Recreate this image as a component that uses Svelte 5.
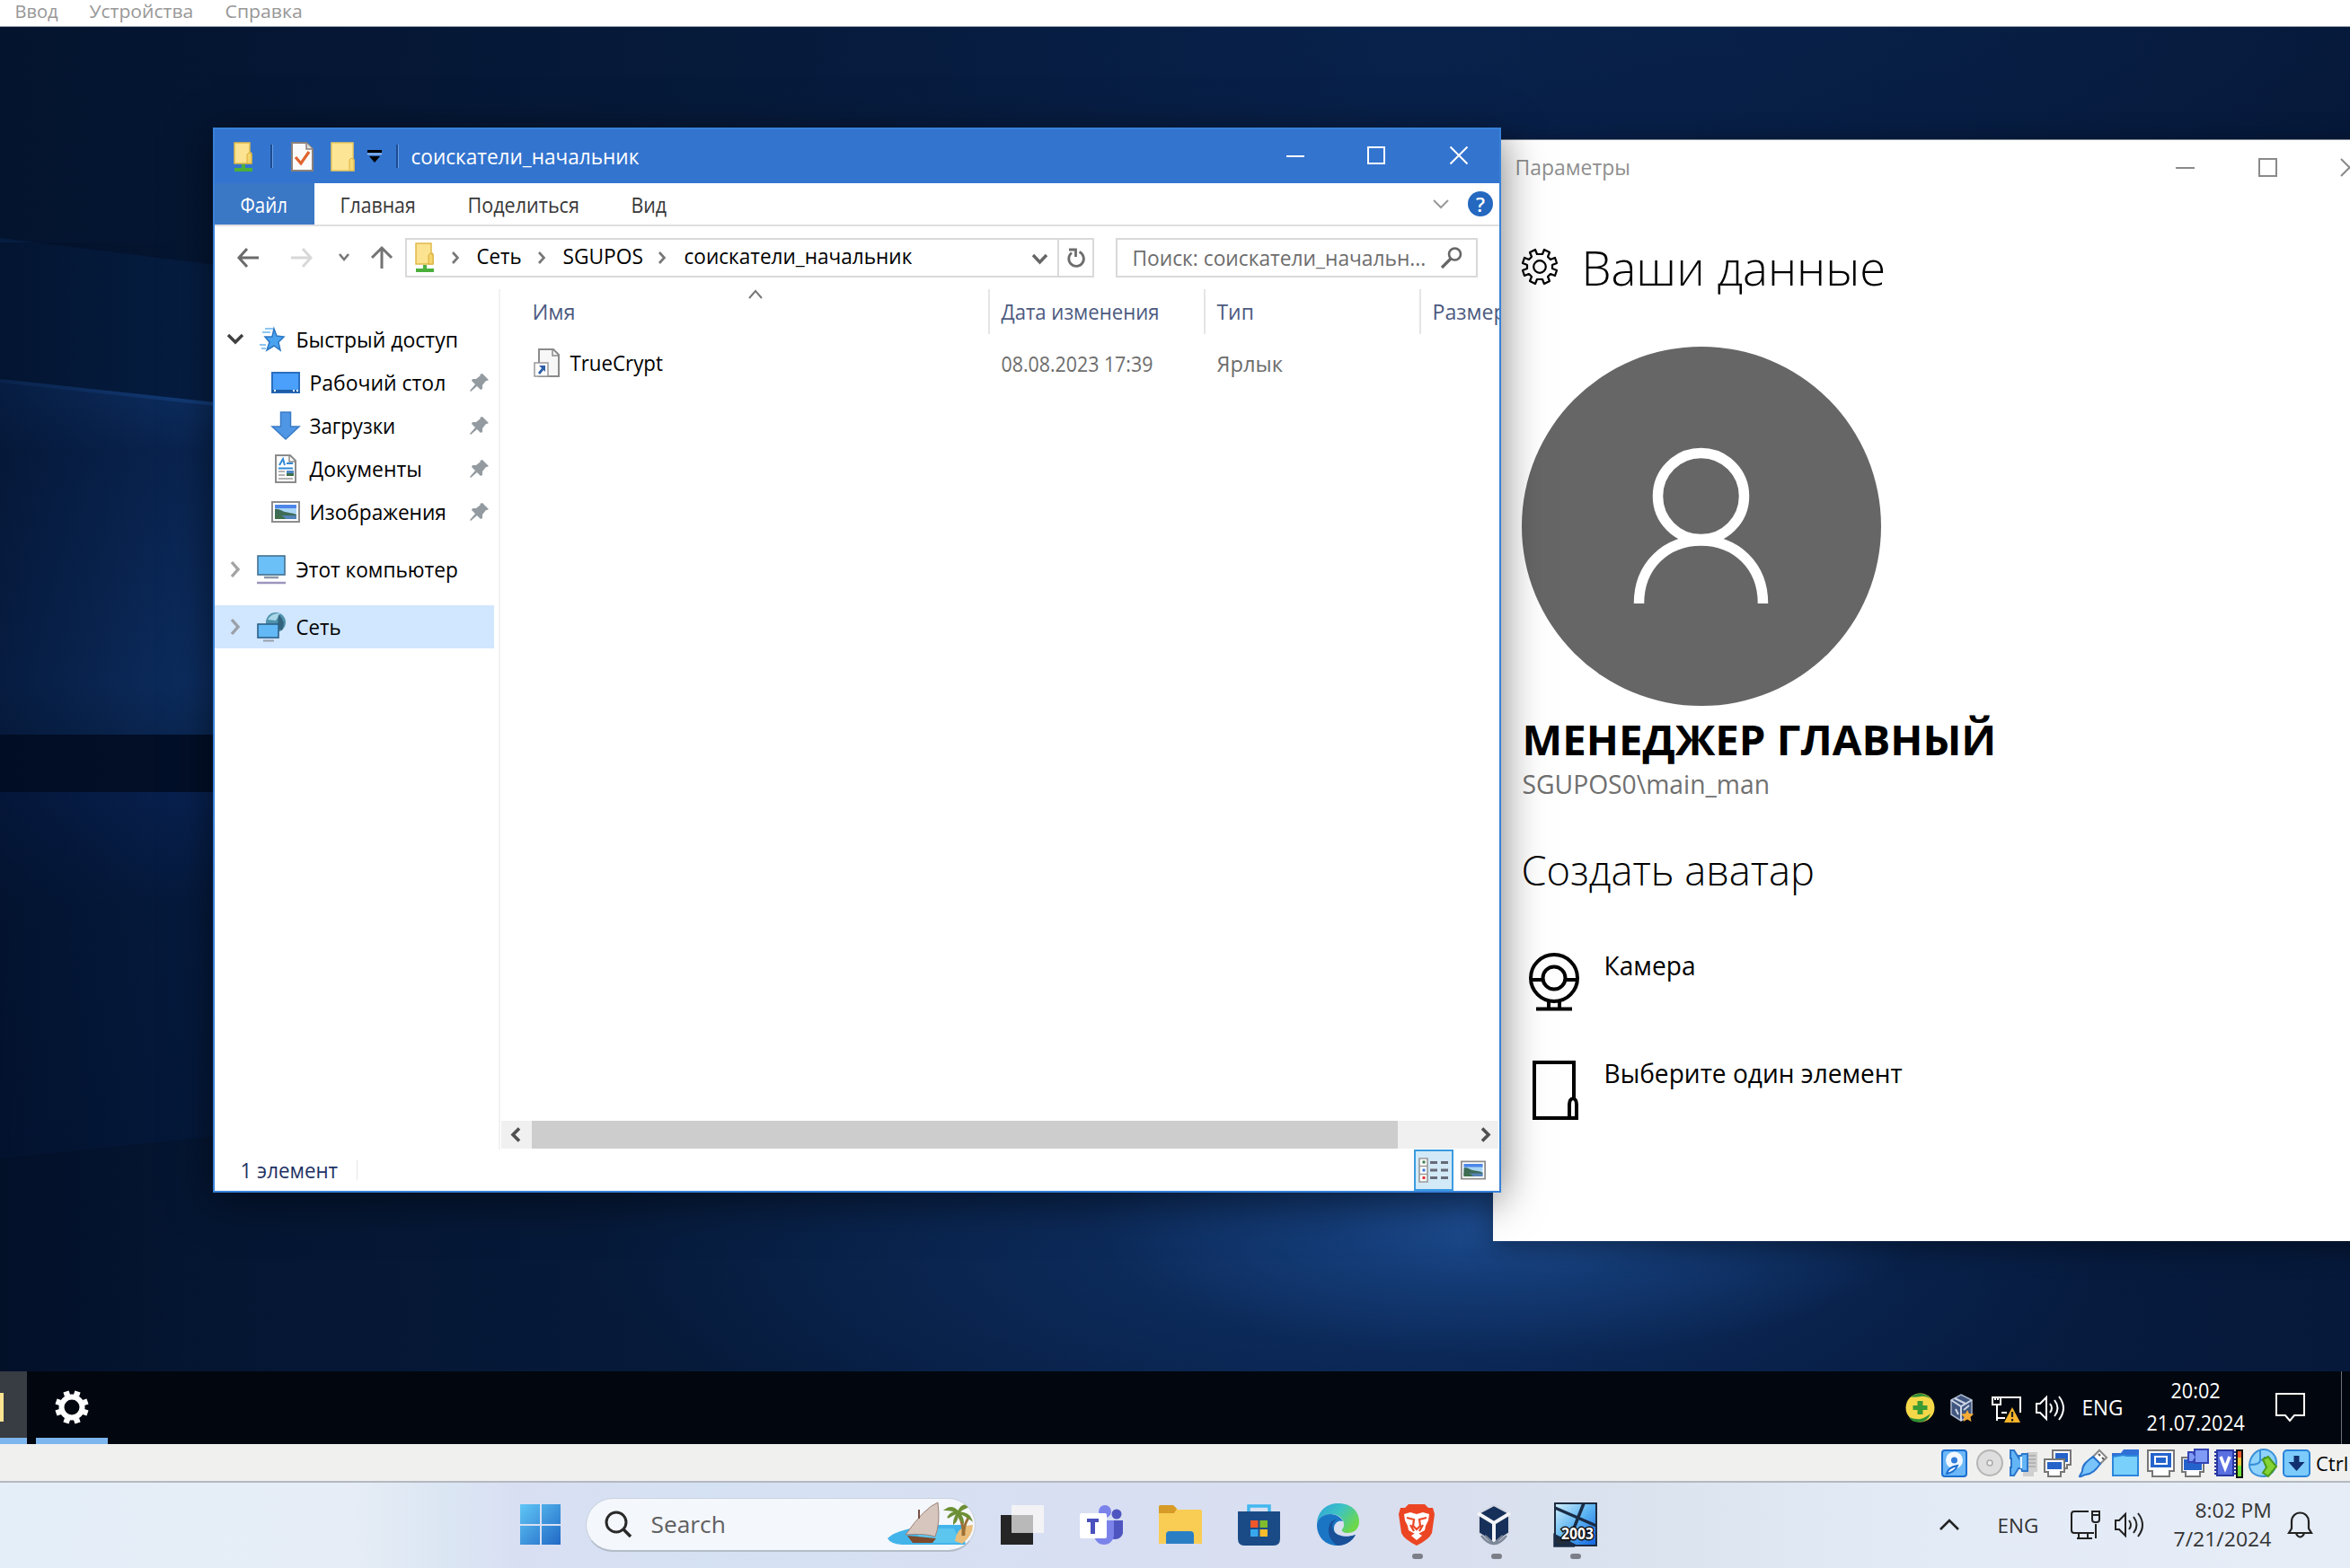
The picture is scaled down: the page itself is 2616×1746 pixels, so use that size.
<script>
  // Stretches or condenses a label horizontally so its glyphs span `width` pixels, less the side bearings.
  function fit(node, width) {
    const natural = node.offsetWidth;
    if (!natural) return;
    node.style.transform = `translateX(1.5px) scaleX(${(width - 2) / natural})`;
    node.style.marginRight = `${width - natural}px`;
  }

  const menu = [
    { text: 'Ввод', w: 50 },
    { text: 'Устройства', w: 118 },
    { text: 'Справка', w: 88 }
  ];

  const quick = [
    { text: 'Рабочий стол', icon: 'desktop', w: 154 },
    { text: 'Загрузки', icon: 'download', w: 98 },
    { text: 'Документы', icon: 'docs', w: 127 },
    { text: 'Изображения', icon: 'pics', w: 154 }
  ];

  const indicators = ['hdd', 'cd', 'audio', 'net', 'usb', 'folder', 'display', 'record', 'cpu', 'mouse', 'key'];
</script>

{#snippet t(text, w)}<span class="fit" use:fit={w}>{text}</span>{/snippet}

{#snippet netFolder()}
  <svg width="22" height="33" viewBox="0 0 22 33">
    <path d="M1 1h17v10l2 2v11H1z" fill="#fbe391" stroke="#e0b94a" stroke-width="1.5" />
    <path d="M15 24V14l2-2 3 2v10z" fill="#f5d56d" stroke="#d9ae3b" stroke-width="1" />
    <path d="M9 25h4v4h8v4H1v-4h8z" fill="#4caf3c" />
  </svg>
{/snippet}

{#snippet picture(w, h)}
  <svg width={w} height={h} viewBox="0 0 32 24">
    <rect x="1" y="1" width="30" height="22" fill="#fff" stroke="#8d8d8d" stroke-width="2" />
    <rect x="4" y="4" width="24" height="16" fill="#a9d5f5" />
    <rect x="4" y="4" width="24" height="4" fill="#4d86e8" />
    <path d="M4 9c5-1 7 2 11 3s8 1 13 3v2H4z" fill="#3e6b56" />
    <path d="M4 16h24v4H4z" fill="#5483b8" />
    <path d="M4 15c6 0 9 1 12 5H4z" fill="#3f6f4b" />
  </svg>
{/snippet}

{#snippet crumb()}
  <svg width="10" height="14" viewBox="0 0 10 14"><path d="M2 1l5.500 6L2 13" fill="none" stroke="#777" stroke-width="2.600" /></svg>
{/snippet}

{#snippet navIcon(name)}
  {#if name === 'desktop'}
    <svg width="32" height="24" viewBox="0 0 32 24">
      <rect x="1" y="1" width="30" height="22" fill="#4aa0fb" stroke="#2a6fc0" stroke-width="2" />
      <path d="M1 20h30v3H1z" fill="#1d5ca8" /><path d="M3 21h2M24 21h2M28 21h2" stroke="#fff" stroke-width="2" />
    </svg>
  {:else if name === 'download'}
    <svg width="32" height="32" viewBox="0 0 32 32"><path d="M10.500 1h11v16H31L16 31 1 17h9.500z" fill="#4f97e4" stroke="#3a7bc8" stroke-width="1.500" /></svg>
  {:else if name === 'docs'}
    <svg width="32" height="32" viewBox="0 0 32 32">
      <path d="M5 1h16l6 6v24H5z" fill="#fff" stroke="#8b8b8b" stroke-width="2" /><path d="M20 1v7h7" fill="none" stroke="#8b8b8b" stroke-width="1.500" />
      <path d="M9 12l4-7 2 7M17 10h7M8 15.500h16" stroke="#2f8ad8" stroke-width="2" fill="none" />
      <path d="M8 19h7M8 23h7M8 27h16" stroke="#9a9a9a" stroke-width="1.500" /><path d="M17 18h8v6h-8z" fill="#4d86c8" /><path d="M17 21h8v3h-8z" fill="#3f6f4b" />
    </svg>
  {:else}
    {@render picture(32, 24)}
  {/if}
{/snippet}

{#snippet speaker(color)}
  <svg width="34" height="30" viewBox="0 0 34 30" fill="none" stroke={color} stroke-width="2">
    <path d="M2 10h4l7-7v24l-7-7H2z" /><path d="M17 10q4 5 0 10M22 6q7 9 0 18M27 2q10 13 0 26" />
  </svg>
{/snippet}

{#snippet indicator(name)}
  <svg width="33" height="33" viewBox="0 0 33 33">
    {#if name === 'hdd'}
      <rect x="2" y="2" width="27" height="29" rx="3" fill="#6cb8f8" stroke="#1c6fd0" stroke-width="2" /><circle cx="15.500" cy="13" r="9.500" fill="#f2f8ff" /><circle cx="15.500" cy="13" r="3.500" fill="#2f7ddb" />
      <path d="M7 28c1-5 6-8 12-9-2 5-6 8-12 9z" fill="#eef6ff" stroke="#1c6fd0" stroke-width="2" />
    {:else if name === 'cd'}
      <circle cx="16" cy="16" r="14" fill="#dedede" stroke="#b5b5b5" stroke-width="2" /><circle cx="16" cy="16" r="3" fill="#eee" stroke="#aaa" stroke-width="1.500" />
    {:else if name === 'audio'}
      <path d="M20 4h12v22h-4v5H16v-5h4z" fill="#cfcfcf" /><path d="M22 8h8M22 12h8M22 16h8M22 20h8" stroke="#aaa" stroke-width="1.500" />
      <path d="M2 2h4l5 8V8q0 0 3 0l1-2h6v19h-6l-1-3h-3l-5 8H2v-9h1V11H2z" fill="#64b5f6" stroke="#2c76c9" stroke-width="2" /><path d="M14 9v13" stroke="#e4f3ff" stroke-width="2" />
    {:else if name === 'net'}
      <path d="M11 2h20v16h-4v4H15v-4h-4z" fill="#fff" stroke="#777" stroke-width="2" /><path d="M14 5h14v10H14z" fill="#2563c9" />
      <path d="M2 12h22v14h-4v5H6v-5H2z" fill="#fff" stroke="#777" stroke-width="2" /><path d="M5 15h16v8H5z" fill="#2563c9" />
    {:else if name === 'usb'}
      <path d="M17 9l7-7 8 8-7 7z" fill="#fff" stroke="#888" stroke-width="2" /><path d="M23 6l2 2M27 10l2 2" stroke="#555" stroke-width="2" />
      <path d="M2 31c1-3 2-3 3-6 0-7 5-11 12-16l8 8c-5 7-9 11-16 12-3 0-4 3-7 2z" fill="#79c4fb" stroke="#2672cc" stroke-width="2" />
    {:else if name === 'folder'}
      <path d="M1 5h10l3-4h17v8H1z" fill="#2f6fd6" /><path d="M2 9l12-2 3 1h13v22H2z" fill="#79d0fb" stroke="#2b86dc" stroke-width="2" />
    {:else if name === 'display'}
      <path d="M2 2h29v23h-5v6H7v-6H2z" fill="#fff" stroke="#777" stroke-width="2" /><path d="M5 5h23v16H5z" fill="#2463cc" /><path d="M10 9h13v8H10z" fill="#2463cc" stroke="#fff" stroke-width="2" />
    {:else if name === 'record'}
      <path d="M2 10h24v16h-4v5H6v-5H2z" fill="#fff" stroke="#777" stroke-width="2" /><path d="M4 12h20v12H4z" fill="#2463cc" /><path d="M9 4h5l2 3V1h15v15H16v-4l-2 3H9z" fill="#7f9bf5" stroke="#3445b5" stroke-width="2" />
    {:else if name === 'cpu'}
      <path d="M1 4h24M1 8h24M1 12h24M1 16h24M1 20h24M1 24h24M1 28h24" stroke="#2838a0" stroke-width="2" /><rect x="4" y="2" width="18" height="28" fill="#5a6fe0" stroke="#2838a0" stroke-width="2" />
      <path d="M8 9l5 13 5-13" fill="none" stroke="#fff" stroke-width="3.500" />
      <rect x="25" y="1" width="8" height="32" fill="#111" /><path d="M27 3h4v7h-4z" fill="#f55a2c" /><path d="M27 10h4v9h-4z" fill="#f5c83a" /><path d="M27 19h4v12h-4z" fill="#72e036" />
    {:else if name === 'mouse'}
      <path d="M2 18C3 8 10 1 18 1s14 7 14 14c0 9-7 16-14 16S2 28 2 18z" fill="#8fd3fb" stroke="#3a90d8" stroke-width="2" /><path d="M14 2v11c3 0 5-1 5-4M2 18c5 0 12-1 12-5" stroke="#3a90d8" stroke-width="2" fill="none" />
      <path d="M17 12l6-3 9 11-9 11-6-4 4-6z" fill="#83d334" stroke="#4c9a1c" stroke-width="2" />
    {:else}
      <rect x="2" y="2" width="29" height="29" rx="4" fill="#7ccbfb" stroke="#2a83d8" stroke-width="2" /><path d="M13.500 8h6v7h6L16.500 25l-9-10h6z" fill="#12306e" />
    {/if}
  </svg>
{/snippet}

<div class="screen">
  <div class="menubar">
    {#each menu as m}<span class="menuitem">{@render t(m.text, m.w)}</span>{/each}
  </div>

  <div class="desktop">
    <!-- Wallpaper light beams and horizon on the left -->
    <svg class="wallpaper" width="600" height="1497" viewBox="0 0 600 1497">
      <defs>
        <linearGradient id="beam" x1="0" y1="0" x2="0" y2="1"><stop stop-color="#0d2f62" /><stop offset=".2" stop-color="#092450" /><stop offset=".85" stop-color="#0c2c5e" /><stop offset="1" stop-color="#0a2753" /></linearGradient>
        <linearGradient id="floor" x1="0" y1="0" x2="0" y2="1"><stop stop-color="#082150" /><stop offset=".3" stop-color="#051a3d" /><stop offset="1" stop-color="#04183a" /></linearGradient>
        <linearGradient id="side" x1="0" y1="0" x2="1" y2="0"><stop stop-color="#010c22" stop-opacity=".5" /><stop offset=".35" stop-color="#010c22" stop-opacity="0" /></linearGradient>
      </defs>
      <path d="M0 235l240 30v160L0 396z" fill="#061f45" opacity=".8" />
      <path d="M0 394l240 26v370H0z" fill="url(#beam)" />
      <path d="M0 394l240 26" stroke="#123a75" stroke-width="4" />
      <path d="M0 788h240v66H0z" fill="#020f28" />
      <path d="M0 852h240v383L0 1260z" fill="url(#floor)" />
      <path d="M0 240h600v1257H0z" fill="url(#side)" />
    </svg>

    <!-- Settings window -->
    <section class="settings">
      <header class="settings-title">
        <span>{@render t('Параметры', 130)}</span>
        <svg width="21" height="21" viewBox="0 0 21 21"><path d="M0 11h21" stroke="#8a8a8a" stroke-width="2" /></svg>
        <svg width="21" height="21" viewBox="0 0 21 21"><rect x="1" y="1" width="19" height="19" fill="none" stroke="#8a8a8a" stroke-width="2" /></svg>
        <svg width="21" height="21" viewBox="0 0 21 21"><path d="M1 1l19 19M20 1L1 20" stroke="#8a8a8a" stroke-width="2" /></svg>
      </header>
      <div class="heading">
        <svg width="40" height="40" viewBox="0 0 40 40" fill="none" stroke="#000" stroke-width="2.200" stroke-linejoin="round">
          <path d="M17 6l-2-5-6 3 2 5-3 3-5-2-2 6 5 2v4l-5 2 2 6 5-2 3 3-2 5 6 3 2-5h6l2 5 6-3-2-5 3-3 5 2 2-6-5-2v-4l5-2-2-6-5 2-3-3 2-5-6-3-2 5z" /><circle cx="20" cy="20" r="6.800" />
        </svg>
        <span class="h1">{@render t('Ваши данные', 341)}</span>
      </div>
      <svg class="avatar" width="400" height="400" viewBox="0 0 400 400">
        <circle cx="200" cy="200" r="200" fill="#666" />
        <g fill="none" stroke="#fff" stroke-width="11.500"><circle cx="199.500" cy="166.500" r="48" /><path d="M130.500 286c0-42 30-70 69-70s69 28 69 70" /></g>
      </svg>
      <div class="name">{@render t('МЕНЕДЖЕР ГЛАВНЫЙ', 530)}</div>
      <div class="account">{@render t('SGUPOS0\\main_man', 278)}</div>
      <div class="h2">{@render t('Создать аватар', 329)}</div>
      <div class="options">
        <div class="option">
          <svg width="64" height="70" viewBox="0 0 64 70" fill="none" stroke="#000" stroke-width="4">
            <circle cx="35" cy="33" r="26" /><circle cx="35" cy="33" r="12.500" /><path d="M9 35h13M48 35h13M29 59v7M41 59v7M15 67.500h40" />
          </svg>
          <span>{@render t('Камера', 104)}</span>
        </div>
        <div class="option">
          <svg width="64" height="75" viewBox="0 0 64 75" fill="none" stroke="#000" stroke-width="4">
            <path d="M57 48V7H13v62h47V54c0-9-8-9-8 0v15" />
          </svg>
          <span>{@render t('Выберите один элемент', 334)}</span>
        </div>
      </div>
    </section>

    <!-- File explorer window -->
    <section class="explorer">
      <header class="titlebar">
        {@render netFolder()}
        <i class="sep"></i>
        <svg width="26" height="33" viewBox="0 0 26 33"><path d="M1 1h16l7 7v24H1z" fill="#fafafa" stroke="#8b8178" stroke-width="2" /><path d="M17 1v7h7" fill="#ddd" stroke="#8b8178" stroke-width="1.500" /><path d="M5 17l6 7 9-13" fill="none" stroke="#e0642c" stroke-width="3.200" /></svg>
        <svg width="28" height="33" viewBox="0 0 28 33"><path d="M1 1h24v18l1 1v12H1z" fill="#fce594" stroke="#ecc95c" stroke-width="1.500" /><path d="M21 32V20l2-2 3 2v12z" fill="#f8da76" stroke="#dcb545" /></svg>
        <svg width="16" height="14" viewBox="0 0 16 14"><path d="M0 0h16v3H0zM2 7h12l-6 7z" fill="#000" /><path d="M0 4.500h16" stroke="#a9c6ee" stroke-width="1.500" /></svg>
        <i class="sep"></i>
        <span class="title">{@render t('соискатели_начальник', 256)}</span>
        <svg class="ctl" width="20" height="20" viewBox="0 0 20 20"><path d="M0 11h20" stroke="#fff" stroke-width="2" /></svg>
        <svg class="ctl" width="20" height="20" viewBox="0 0 20 20"><rect x="1" y="1" width="18" height="18" fill="none" stroke="#fff" stroke-width="2" /></svg>
        <svg class="ctl" width="20" height="20" viewBox="0 0 20 20"><path d="M.500.500l19 19M19.500.500l-19 19" stroke="#fff" stroke-width="2" /></svg>
      </header>

      <nav class="ribbon">
        <span class="file"><span>{@render t('Файл', 54)}</span></span>
        <span>{@render t('Главная', 86)}</span>
        <span>{@render t('Поделиться', 126)}</span>
        <span>{@render t('Вид', 42)}</span>
        <svg width="18" height="11" viewBox="0 0 18 11"><path d="M1 1l8 8 8-8" fill="none" stroke="#999" stroke-width="2" /></svg>
        <span class="help">?</span>
      </nav>

      <div class="address">
        <svg width="24" height="22" viewBox="0 0 24 22"><path d="M11 1L2 11l9 10M2 11h22" fill="none" stroke="#6b6b6b" stroke-width="3" /></svg>
        <svg width="24" height="22" viewBox="0 0 24 22"><path d="M13 1l9 10-9 10M22 11H0" fill="none" stroke="#d8d8d8" stroke-width="3" /></svg>
        <svg width="12" height="9" viewBox="0 0 12 9"><path d="M1 1l5 6 5-6" fill="none" stroke="#777" stroke-width="2.600" /></svg>
        <svg width="24" height="25" viewBox="0 0 24 25"><path d="M1 13L12 2l11 11M12 2v23" fill="none" stroke="#737373" stroke-width="3" /></svg>
        <div class="path">
          {@render netFolder()}
          {@render crumb()}
          <span>{@render t('Сеть', 52)}</span>
          {@render crumb()}
          <span>{@render t('SGUPOS', 91)}</span>
          {@render crumb()}
          <span>{@render t('соискатели_начальник', 256)}</span>
          <svg class="low" width="17" height="12" viewBox="0 0 17 12"><path d="M1 1l7.500 8L16 1" fill="none" stroke="#666" stroke-width="3.400" /></svg>
          <span class="refresh"><svg width="22" height="24" viewBox="0 0 22 24"><path d="M14.500 5.500A8.300 8.300 0 1 1 6 6.500M3 3h7.500v8" fill="none" stroke="#6d6d6d" stroke-width="2.800" /></svg></span>
        </div>
        <div class="search">
          <span>{@render t('Поиск: соискатели_начальн...', 329)}</span>
          <svg width="24" height="24" viewBox="0 0 24 24"><circle cx="15.500" cy="8" r="6.500" fill="none" stroke="#666" stroke-width="2.600" /><path d="M11 13L1 23" stroke="#666" stroke-width="3.200" /></svg>
        </div>
      </div>

      <div class="body">
        <aside class="tree">
          <div class="node top">
            <svg width="20" height="14" viewBox="0 0 20 14"><path d="M2 2l8 8 8-8" fill="none" stroke="#404040" stroke-width="3.400" /></svg>
            <svg width="34" height="30" viewBox="0 0 34 30"><path d="M19 3l3 8 8 1-6 6 2 9-7-5-8 5 3-9-5-6h8z" fill="#4aa3ef" stroke="#2a76c4" stroke-width="1.500" /><path d="M9 3h9M6 7h9M3 21h7M5 25h5" stroke="#6bb4ee" stroke-width="1.500" /></svg>
            <span>{@render t('Быстрый доступ', 182)}</span>
          </div>
          {#each quick as q}
            <div class="node sub">
              {@render navIcon(q.icon)}
              <span>{@render t(q.text, q.w)}</span>
              <svg width="22" height="22" viewBox="0 0 22 22"><path d="M14 1l7 7-2 1-1 0-4 5 0 4-2 1-4-4-7 6-1-1 6-7-4-4 1-2h4l5-4-1-1z" fill="#939ba1" /></svg>
            </div>
          {/each}
          <div class="node top gap">
            <svg class="arr" width="20" height="20" viewBox="0 0 20 20"><path d="M6 2l7 8-7 8" fill="none" stroke="#a3a3a3" stroke-width="3.400" /></svg>
            <svg width="32" height="32" viewBox="0 0 32 32"><rect x="1" y="1" width="30" height="21" fill="#6cc0f8" stroke="#44708f" stroke-width="1.600" /><path d="M8 25h16" stroke="#8b97a5" stroke-width="2.500" /><path d="M0 31h32" stroke="#9c95bf" stroke-width="2.500" /></svg>
            <span>{@render t('Этот компьютер', 182)}</span>
          </div>
          <div class="node top gap selected">
            <svg class="arr" width="20" height="20" viewBox="0 0 20 20"><path d="M6 2l7 8-7 8" fill="none" stroke="#9aa0a8" stroke-width="3.400" /></svg>
            <svg width="34" height="34" viewBox="0 0 34 34"><circle cx="21" cy="12" r="11" fill="#4f92ad" /><path d="M12 9q4-8 14-7l-5 8z" fill="#a9d6e8" /><path d="M24 3q9 8 4 18l-5-2z" fill="#33647d" /><rect x="1" y="14" width="23" height="15" fill="#62b9f5" stroke="#2d5f87" stroke-width="1.600" /><path d="M7 32.500h12" stroke="#97a0ab" stroke-width="2" /></svg>
            <span>{@render t('Сеть', 52)}</span>
          </div>
        </aside>

        <div class="main">
          <div class="cols">
            <span class="col first">{@render t('Имя', 50)}</span>
            <span class="col">{@render t('Дата изменения', 178)}</span>
            <span class="col">{@render t('Тип', 43)}</span>
            <span class="col">{@render t('Размер', 84)}</span>
            <svg class="sort" width="16" height="11" viewBox="0 0 16 11"><path d="M1 10l7-8 7 8" fill="none" stroke="#777" stroke-width="2" /></svg>
          </div>
          <div class="cols row">
            <span class="col first entry">
              <svg width="32" height="34" viewBox="0 0 32 34"><path d="M7 2h16l6 6v24H7z" fill="#f7f7f7" stroke="#8b8b8b" stroke-width="2" /><path d="M22 2v7h7" fill="none" stroke="#8b8b8b" stroke-width="1.500" /><rect x="2" y="17" width="15" height="15" fill="#fff" stroke="#999" stroke-width="1.500" /><path d="M7 20h7v7l-2-2-4 5-2-2 4-5z" fill="#2d5ea8" /></svg>
              <b>{@render t('TrueCrypt', 105)}</b>
            </span>
            <span class="col">{@render t('08.08.2023 17:39', 171)}</span>
            <span class="col">{@render t('Ярлык', 75)}</span>
          </div>
          <div class="scroll">
            <svg width="34" height="31" viewBox="0 0 34 31"><path d="M20 8.500l-7 7 7 7" fill="none" stroke="#505050" stroke-width="3.600" /></svg>
            <div class="thumb"></div>
            <svg width="34" height="31" viewBox="0 0 34 31"><path d="M14 8.500l7 7-7 7" fill="none" stroke="#505050" stroke-width="3.600" /></svg>
          </div>
        </div>
      </div>

      <footer class="status">
        <span class="count">{@render t('1 элемент', 111)}</span>
        <i></i>
        <span class="view">
          <svg width="34" height="28" viewBox="0 0 34 28"><path d="M1 1h9v26H1zM1 9.500h9M1 18.500h9" fill="#fff" stroke="#999" stroke-width="1.600" /><path d="M4.500 5h3" stroke="#3a7a4a" stroke-width="3" /><path d="M4.500 14h3" stroke="#3a7ae0" stroke-width="3" /><path d="M4.500 22.500h3" stroke="#e03030" stroke-width="3" /><path d="M13 5.500h8M25 5.500h8M13 14h8M25 14h8M13 22.500h8M25 22.500h8" stroke="#666b78" stroke-width="2.800" /></svg>
        </span>
        {@render picture(28, 22)}
      </footer>
    </section>
  </div>

  <div class="task10">
    <div class="app active"><i></i></div>
    <div class="app gear">
      <svg width="38" height="38" viewBox="0 0 38 38"><circle cx="19" cy="19" r="11.500" fill="none" stroke="#fff" stroke-width="6" /><g stroke="#fff" stroke-width="6.500"><path d="M14 6L12.500 1.500M24 6l1.500-4.500M14 32l-1.500 4.500M24 32l1.500 4.500M6 14l-4.500-1.500M6 24l-4.500 1.500M32 14l4.500-1.500M32 24l4.500 1.500" /></g></svg>
    </div>
    <svg width="33" height="33" viewBox="0 0 33 33"><circle cx="16.500" cy="16.500" r="16" fill="#f5d84a" /><path d="M6 4.500Q18-4 29 7q-7-4-12-3T6 4.500zM4 27q8 3 13 2t11-6q-3 9-12 9.500T4 27z" fill="#2f8f35" /><path d="M13.500 9h6v5h5v5h-5v5h-6v-5h-5v-5h5z" fill="#3a9a33" /></svg>
    <svg width="28" height="32" viewBox="0 0 28 32"><path d="M12 1l12 6v16l-12 7L1 23V7z" fill="#40567f" stroke="#a8b4cc" stroke-width="1.500" /><path d="M1 7l11 7 12-7M12 14v16M5 5l12 6M6 17l3 6M15 18l6-5" stroke="#cdd6e6" stroke-width="2" fill="none" /><path d="M19 18l2 4 5 .500-3.500 3.500 1 5-4.500-2.500-4.500 2.500 1-5L12 22.500l5-.500z" fill="#f5ab35" /></svg>
    <svg width="34" height="32" viewBox="0 0 34 32"><path d="M10 4h22v17M11 21h6M6 12v18M6 27h9M1 4h9v8H1zM4 4v3M7 4v3" fill="none" stroke="#fff" stroke-width="2" /><path d="M23 15l9 17H14z" fill="#f7b52b" /><path d="M23 20v6M23 28v2.500" stroke="#222" stroke-width="2.200" /></svg>
    {@render speaker('#fff')}
    <span class="lang">{@render t('ENG', 48)}</span>
    <div class="clock10"><span>{@render t('20:02', 57)}</span><span>{@render t('21.07.2024', 111)}</span></div>
    <svg width="33" height="33" viewBox="0 0 33 33"><path d="M1 1h31v24H21l-5 6-5-6H1z" fill="none" stroke="#fff" stroke-width="2" /></svg>
    <i class="peek"></i>
  </div>

  <div class="vmstatus">
    {#each indicators as name}{@render indicator(name)}{/each}
    <span>Ctrl</span>
  </div>

  <div class="task11">
    <svg width="47" height="47" viewBox="0 0 47 47">
      <defs><linearGradient id="win" x1="0" y1="0" x2="47" y2="47" gradientUnits="userSpaceOnUse"><stop stop-color="#62c9f7" /><stop offset="1" stop-color="#1f66c4" /></linearGradient></defs>
      <path d="M1 1h22v22H1zM25 1h21v22H25zM1 25h22v21H1zM25 25h21v21H25z" fill="url(#win)" />
    </svg>
    <div class="pill">
      <svg width="30" height="30" viewBox="0 0 30 30"><circle cx="13" cy="13" r="11" fill="none" stroke="#2a2a2a" stroke-width="3" /><path d="M21 21l8 8" stroke="#2a2a2a" stroke-width="3.500" /></svg>
      <span>{@render t('Search', 85)}</span>
      <svg width="98" height="50" viewBox="0 0 98 50">
        <path d="M1 41q6-6 18-9l20-6h44l5 22H17Q4 47 1 41z" fill="#42b4ea" /><path d="M30 30h45l7 16H40z" fill="#69cdf1" opacity=".7" />
        <path d="M76 44q2-14 13-17 6-1 7-1 0 12-12 21z" fill="#e9bd7a" />
        <path d="M57 1Q42 7 21 37q20-2 33 2Q60 24 57 1z" fill="#d6c6be" stroke="#9a8378" stroke-width="1" /><path d="M36 9v10" stroke="#7a5146" stroke-width="2" />
        <path d="M23 38l32 3-4 5H29z" fill="#7d4a2c" />
        <path d="M85 38q1-12-5-24M86 38q-1-10 5-20" fill="none" stroke="#9b7138" stroke-width="3" /><path d="M66 9q7-5 14 3-8-3-14-3zM80 12q3-10 13-7-8 2-13 7zM68 18q4-7 12-6-7 2-12 6zM80 12q12 1 14 8-6-5-14-8zM79 13q-4 6-4 11 4-3 4-11zM80 12q5 6 5 11-5-4-5-11z" fill="#6d8f35" stroke="#6d8f35" stroke-width="2" />
      </svg>
    </div>
    <svg width="48" height="46" viewBox="0 0 48 46"><rect x="0" y="12" width="36" height="33" fill="#252525" /><rect x="12" y="1" width="36" height="31" fill="#f3f3f5" /><rect x="12" y="12" width="24" height="20" fill="#b9b9ba" /></svg>
    <svg width="48" height="48" viewBox="0 0 48 48"><circle cx="28" cy="9" r="7" fill="#7b83eb" /><circle cx="41" cy="12" r="5.500" fill="#4f55c0" /><path d="M35 19h13v14a9 9 0 0 1-13 6z" fill="#4f55c0" /><path d="M16 19h22v16a11 11 0 0 1-22 0z" fill="#7b83eb" /><rect x="0" y="11" width="30" height="28" rx="2" fill="#fff" /><path d="M8 17h13v4h-4v13h-5V21H8z" fill="#4a50bd" /></svg>
    <svg width="48" height="46" viewBox="0 0 48 46"><path d="M0 3q0-2 2-2h14l5 5h25q2 0 2 2v36H0z" fill="#f9cd54" /><path d="M0 3q0-2 2-2h14l4 4-3 5H0z" fill="#d79b28" /><path d="M8 44V34q0-4 4-4h23q4 0 4 4v10z" fill="#2a7fc4" /></svg>
    <svg width="48" height="48" viewBox="0 0 48 48"><path d="M12 11V3h23v8" fill="none" stroke="#42b8f0" stroke-width="3.500" /><path d="M0 9h47v30q0 8-7 8H7q-7 0-7-8z" fill="#1a4b86" /><path d="M14 19h8.500v8H14z" fill="#f0572a" /><path d="M24.500 19H33v8h-8.500z" fill="#80bc2c" /><path d="M14 29h8.500v8H14z" fill="#38a8ee" /><path d="M24.500 29H33v8h-8.500z" fill="#fbbc2c" /></svg>
    <svg width="49" height="49" viewBox="0 0 49 49">
      <defs><linearGradient id="edge" x1="0" y1="0" x2="1" y2=".6"><stop stop-color="#2fa0dc" /><stop offset=".5" stop-color="#3cc3c4" /><stop offset="1" stop-color="#6ed848" /></linearGradient></defs>
      <path d="M1 23C2 9 12 1 25 1c14 0 23 9 23 20 0 9-6 13-13 13-4 0-7-2-6-4 2-2 2-4 2-6 0-6-6-11-14-11C9 13 3 17 1 23z" fill="url(#edge)" />
      <path d="M1 25c0-7 7-12 15-12 7 0 12 4 14 8-5-2-10 2-10 8 0 9 10 12 24 7-5 8-12 12-20 12C10 48 1 38 1 25z" fill="#1b75c5" /><path d="M15 25c1-4 5-6 8-6-4 2-6 6-4 11 2 7 14 10 25 6-4 8-12 12-20 12-9-5-12-15-9-23z" fill="#195099" />
    </svg>
    <svg width="42" height="48" viewBox="0 0 42 48"><path d="M12 1h18l4 4h5l2 7-3 21q-3 7-17 14Q7 40 4 33L1 12l2-7h5z" fill="#ec4524" /><path d="M7 12l7-2 7 2 7-2 7 2-1 7-3 6-1 5-9 5-9-5-1-5-3-6z" fill="#fff" /><path d="M10 16l8 2-1 7 4 4 4-4-1-7 8-2M14 24l4 7M28 24l-4 7" fill="none" stroke="#ec4524" stroke-width="2.200" /><path d="M15 36l6-4 6 4-6 5z" fill="#fff" /></svg>
    <svg width="40" height="48" viewBox="0 0 40 48"><path d="M20 2l17 9v22L20 44 3 33V11z" fill="#16305a" stroke="#d4d9e5" stroke-width="2" /><path d="M2 11l18 11 18-11M20 22v22" stroke="#f2f4f8" stroke-width="4" fill="none" /><path d="M6 36q14 18 28 0M10 36l10 9 10-9" fill="none" stroke="#7c8798" stroke-width="2.500" /></svg>
    <svg width="48" height="49" viewBox="0 0 48 49">
      <defs><linearGradient id="sky" x1="0" y1="0" x2="1" y2="1"><stop stop-color="#d4f0fb" /><stop offset=".5" stop-color="#5ab3f2" /><stop offset="1" stop-color="#1161e0" /></linearGradient></defs>
      <rect x="1" y="1" width="46" height="47" fill="url(#sky)" stroke="#1d2c40" stroke-width="2" /><path d="M1 6l46 20M33 1L16 44M1 37l22 11H1z" stroke="#1a2c46" stroke-width="3.500" fill="#222d3a" />
      <text x="8" y="41" class="year" textLength="36" lengthAdjust="spacingAndGlyphs">2003</text>
    </svg>
    <svg width="22" height="13" viewBox="0 0 22 13"><path d="M1 12L11 2l10 10" fill="none" stroke="#222" stroke-width="2.600" /></svg>
    <span class="lang11">{@render t('ENG', 48)}</span>
    <svg width="34" height="34" viewBox="0 0 34 34" fill="none" stroke="#222" stroke-width="2"><path d="M20 2H4q-3 0-3 3v18q0 3 3 3h22M9 26v6M19 26v6M7 32h17M28 16v16M24 2h8v9q0 3-3 3h-2q-3 0-3-3zM24 6h8" /></svg>
    {@render speaker('#222')}
    <div class="clock11"><span>{@render t('8:02 PM', 87)}</span><span>{@render t('7/21/2024', 111)}</span></div>
    <svg width="27" height="30" viewBox="0 0 27 30" fill="none" stroke="#222" stroke-width="2.200"><path d="M4 19v-8a9.500 9.500 0 0 1 19 0v8l3 5H1zM9 25q4.500 7 9 0" /></svg>
  </div>
  <div class="dots"><i></i><i></i><i></i></div>
</div>

<style>
  :global(body) { margin: 0; overflow: hidden; }
  .screen {
    width: 2616px; height: 1746px; position: relative; overflow: hidden;
    display: flex; flex-direction: column;
    font: 24px/1 'Open Sans', 'Noto Sans', 'Liberation Sans', sans-serif; color: #000;
  }
  svg { display: block; overflow: visible; flex: none; }
  .fit { display: inline-block; transform-origin: 0 50%; white-space: nowrap; line-height: inherit; }
  span, b { white-space: nowrap; font-weight: inherit; }

  .menubar { height: 30px; box-sizing: border-box; background: #fff; border-bottom: 1px solid #9aa3b0; display: flex; gap: 33px; padding-left: 15px; font-size: 20.500px; line-height: 24px; color: #979797; }

  .desktop {
    height: 1497px; position: relative; overflow: hidden;
    background:
      radial-gradient(ellipse 460px 150px at 1680px 1330px, #1f4f94 0%, rgba(24, 68, 132, .6) 45%, transparent 100%),
      radial-gradient(ellipse 850px 240px at 1500px 1370px, rgba(16, 52, 106, .8), transparent 100%),
      radial-gradient(ellipse 900px 160px at 1900px 0, rgba(10, 38, 78, .4), transparent 100%),
      linear-gradient(90deg, #04142f, #061a3a 30%, #08204a 60%, #06193a);
  }
  .wallpaper { position: absolute; left: 0; top: 0; }

  .settings { position: absolute; left: 1662px; top: 125px; width: 1000px; height: 1227px; background: #fff; border-top: 1px solid #7d8590; box-sizing: border-box; box-shadow: 0 6px 30px rgba(0, 0, 0, .4); }
  .settings-title { display: grid; grid-template-columns: 737px 92px 91px auto; align-items: center; height: 60px; padding: 0 0 2px 23px; color: #8f8f8f; line-height: 34px; }
  .heading { display: grid; grid-template-columns: 65px auto; align-items: center; height: 80px; margin: 39px 0 0 32px; }
  .h1 { font-size: 54px; font-weight: 300; line-height: 80px; }
  .avatar { margin: 49px 0 0 32px; }
  .name { margin: 7px 0 0 31px; font-size: 47px; font-weight: 700; line-height: 60px; height: 60px; }
  .account { margin: 2px 0 0 31px; font-size: 30px; line-height: 36px; height: 36px; color: #707070; }
  .h2 { margin: 47px 0 0 30px; font-size: 46px; font-weight: 300; line-height: 60px; height: 60px; }
  .options { margin: 58px 0 0 33px; }
  .option { display: grid; grid-template-columns: 89px auto; height: 120px; font-size: 29.500px; line-height: 38px; }

  .explorer { position: absolute; left: 237px; top: 112px; width: 1434px; height: 1186px; box-sizing: border-box; border: 2px solid #3781d8; background: #fff; box-shadow: 0 8px 44px rgba(0, 0, 0, .52); display: flex; flex-direction: column; line-height: 34px; }
  .titlebar { height: 60px; flex: none; background: #3374cf; display: grid; grid-template-columns: 41px 23px 44px 41px 32px 15px 976px 90px 92px auto; align-items: center; padding-left: 21px; }
  .titlebar .sep { width: 2px; height: 26px; background: #1c4c90; border-right: 1px solid #6ba0e6; }
  .title { color: #fff; }
  .ctl { margin-top: -3px; }
  .ribbon { height: 46px; flex: none; border-bottom: 2px solid #dedfe0; display: grid; grid-template-columns: 138px 142px 182px 894px 39px auto; align-items: center; color: #383838; line-height: 36px; }
  .file { display: flex; align-items: center; width: 111px; height: 46px; background: #3a77c5; color: #fff; padding-left: 27px; box-sizing: border-box; }
  .ribbon > span:not(.file, .help), .file > span { padding-top: 1px; }
  .help { width: 28px; height: 28px; border-radius: 50%; background: #2468c0; color: #fff; font-size: 22px; line-height: 28px; text-align: center; font-weight: 600; }
  .address { height: 70px; flex: none; box-sizing: border-box; padding: 0 0 1px 25px; display: grid; grid-template-columns: 60px 53px 36px 38px 791px auto; align-items: center; }
  .path { width: 767px; height: 44px; box-sizing: border-box; border: 2px solid #d9d9d9; padding-left: 9px; display: grid; grid-template-columns: 40px 27px 69px 27px 107px 28px 389px 28px 39px; align-items: center; line-height: 30px; }
  .path span { margin-top: -3px; }
  .path .fit { margin-top: 0; }
  .low { margin-top: 5px; }
  .path .refresh { height: 40px; width: 37px; margin-top: 0; border-left: 2px solid #d9d9d9; display: grid; place-items: center; }
  .search { width: 403px; height: 44px; box-sizing: border-box; border: 2px solid #d9d9d9; padding-left: 15px; display: grid; grid-template-columns: 345px auto; align-items: center; color: #6d6d6d; }
  .body { flex: 1; display: grid; grid-template-columns: 316px 1fr; min-height: 0; }
  .tree { padding-top: 32px; }
  .node { display: grid; align-items: center; height: 48px; width: 311px; }
  .node.top { grid-template-columns: 34px 42px auto; padding-left: 13px; width: 298px; }
  .node.sub { grid-template-columns: 41px 180px auto; padding-left: 63px; width: 248px; }
  .node.gap { margin-top: 16px; }
  .selected { background: #d1e6ff; }
  .main { border-left: 2px solid #f2f2f2; display: flex; flex-direction: column; min-width: 0; overflow: hidden; }
  .cols { position: relative; display: grid; grid-template-columns: 543px 240px 240px 89px; height: 50px; flex: none; color: #4c5a80; }
  .col { border-left: 2px solid #e5e5e5; padding-left: 11px; line-height: 50px; overflow: hidden; }
  .col.first { border: 0; padding-left: 34px; }
  .sort { position: absolute; left: 276px; top: 0; }
  .row { margin-top: 8px; height: 48px; color: #6d6d6d; }
  .row .col { border-color: transparent; line-height: 50px; }
  .row .entry { display: flex; align-items: center; gap: 8px; padding-left: 36px; color: #000; }
  .scroll { margin: auto 1px 1px 1px; height: 31px; flex: none; display: grid; grid-template-columns: 34px 964px 1fr; background: #f0f0f0; }
  .scroll svg:last-child { justify-self: end; margin-right: -2px; }
  .thumb { background: #cdcdcd; }
  .status { height: 46px; flex: none; display: grid; grid-template-columns: 131px 1177px 52px auto; align-items: center; padding-left: 27px; color: #1e3264; }
  .status i { width: 1px; height: 22px; background: #e6e6e6; }
  .view { width: 40px; height: 42px; border: 2px solid #3b9be0; background: #d2e9f7; display: grid; place-items: center; }

  .task10 { height: 81px; flex: none; background: #02070f; color: #fff; display: grid; grid-template-columns: 40px 2081px 50px 46px 48px 51px 72px 145px 73px auto; align-items: center; line-height: 34px; }
  .app { height: 81px; box-sizing: border-box; border-bottom: 7px solid #7db6ee; }
  .app.active { width: 30px; background: #383c43; display: flex; align-items: center; }
  .app.active i { width: 4px; height: 32px; background: #fbe391; margin-top: 6px; }
  .gear { width: 80px; padding: 21px 0 0 21px; }
  .lang { padding-bottom: 2px; }
  .clock10, .clock11 { display: flex; flex-direction: column; }
  .clock10 { width: 111px; align-items: center; line-height: 36px; padding-bottom: 3px; }
  .peek { width: 1px; height: 81px; background: #6b7078; }

  .vmstatus { height: 43px; flex: none; box-sizing: border-box; background: #f0f0ef; border-bottom: 2px solid #b4b9c0; display: grid; grid-template-columns: 39px 37px 38px 39px 37px 39px 38px 37px 38px 38px 38px auto; align-items: center; padding: 1px 0 0 2160px; font-size: 22px; line-height: 30px; }

  .task11 { height: 95px; flex: none; box-sizing: border-box; background: linear-gradient(90deg, #e4eef8 0, #e6edf6 15%, #dbe6f3 19%, #d9dff3 22%, #d5e2f3 30%, #d8dff3 45%, #d9dfee 62%, #dbe3ef 70%, #e2eaf6 80%, #e6edf7); color: #333; display: grid; grid-template-columns: 74px 462px 88px 88px 88px 87px 91px 87px 87px 429px 63px 83px 48px 65px 129px auto; align-items: center; padding: 0 0 2px 578px; font-size: 21.500px; line-height: 32px; }
  .pill { width: 434px; height: 60px; box-sizing: border-box; border-radius: 30px; background: #f4f7fc; border: 1px solid #c9d2de; border-bottom: 2px solid #b3bdc9; display: grid; grid-template-columns: 50px 264px auto; align-items: center; padding-left: 20px; font-size: 26px; color: #606060; overflow: hidden; }
  .lang11 { padding-top: 2px; }
  .clock11 { width: 111px; align-items: flex-end; }
  .year { font: 700 17px 'Open Sans', sans-serif; fill: #fff; stroke: #111; stroke-width: 3px; paint-order: stroke; }
  .dots { position: absolute; left: 1572px; top: 1730px; display: flex; gap: 76px; }
  .dots i { width: 12px; height: 6px; border-radius: 3px; background: #7c7f88; }
</style>
